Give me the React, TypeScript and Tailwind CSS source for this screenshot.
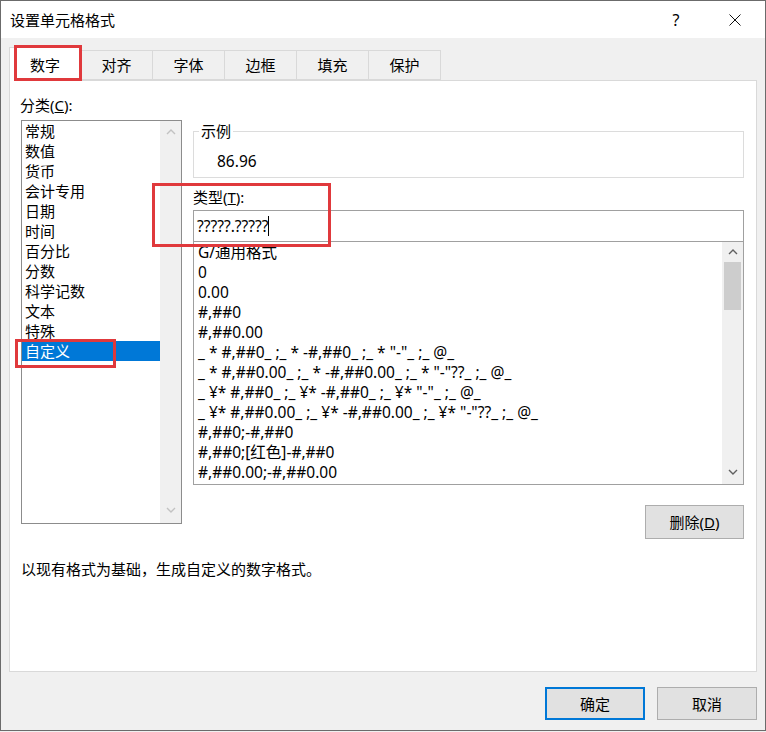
import React from "react";

function Chevron({ dir, color }: { dir: "up" | "down"; color: string }) {
  return (
    <svg width="10" height="6" viewBox="0 0 10 6" className="block">
      {dir === "up" ? (
        <polyline points="1,5 5,1 9,5" fill="none" stroke={color} strokeWidth="1.4" />
      ) : (
        <polyline points="1,1 5,5 9,1" fill="none" stroke={color} strokeWidth="1.4" />
      )}
    </svg>
  );
}

const categories = [
  "常规",
  "数值",
  "货币",
  "会计专用",
  "日期",
  "时间",
  "百分比",
  "分数",
  "科学记数",
  "文本",
  "特殊",
  "自定义",
];

const formats = [
  "G/通用格式",
  "0",
  "0.00",
  "#,##0",
  "#,##0.00",
  '_ * #,##0_ ;_ * -#,##0_ ;_ * "-"_ ;_ @_',
  '_ * #,##0.00_ ;_ * -#,##0.00_ ;_ * "-"??_ ;_ @_',
  '_ ¥* #,##0_ ;_ ¥* -#,##0_ ;_ ¥* "-"_ ;_ @_',
  '_ ¥* #,##0.00_ ;_ ¥* -#,##0.00_ ;_ ¥* "-"??_ ;_ @_',
  "#,##0;-#,##0",
  "#,##0;[红色]-#,##0",
  "#,##0.00;-#,##0.00",
];

const tabs = ["数字", "对齐", "字体", "边框", "填充", "保护"];

export default function App() {
  return (
    <div className="relative w-[766px] h-[732px] overflow-hidden bg-[#f0f0f0] text-[15px] text-black font-['Noto_Sans','Noto_Sans_CJK_SC',sans-serif]">
      <div className="w-[766px] h-[731px] border border-[#6b6b6b] flex flex-col bg-[#f0f0f0]">
        {/* Title bar */}
        <div className="h-[37px] bg-white flex items-center shrink-0">
          <div className="pl-[9px] leading-[20px]">设置单元格格式</div>
          <div className="ml-auto w-[12px] text-center text-[16px] leading-[20px] mr-[47px]">?</div>
          <div className="mr-[24px] flex items-center">
            <svg width="12" height="12" viewBox="0 0 12 12">
              <line x1="0.5" y1="0.5" x2="11.5" y2="11.5" stroke="#111" strokeWidth="1" />
              <line x1="11.5" y1="0.5" x2="0.5" y2="11.5" stroke="#111" strokeWidth="1" />
            </svg>
          </div>
        </div>

        {/* Body */}
        <div className="flex-1 flex flex-col pt-[9px]">
          {/* Tabs */}
          <div className="flex ml-[8px] h-[34px] relative z-10">
            {tabs.map((t, i) =>
              i === 0 ? (
                <div
                  key={t}
                  className="w-[72px] h-[34px] bg-white border border-b-0 border-[#d9d9d9] flex items-center justify-center leading-[20px]"
                >
                  {t}
                </div>
              ) : (
                <div
                  key={t}
                  className="w-[72px] h-[30px] mt-[3px] bg-[#f0f0f0] border border-l-0 border-[#d9d9d9] flex items-center justify-center leading-[20px]"
                >
                  {t}
                </div>
              )
            )}
          </div>

          {/* Panel */}
          <div className="ml-[8px] -mt-px w-[748px] h-[592px] bg-white border border-[#d9d9d9] pt-[14px] pl-[11px] pr-[11px] flex flex-col">
            <div className="flex">
              {/* Left column */}
              <div className="w-[161px] flex flex-col">
                <div className="h-[20px] leading-[20px] -ml-px">
                  分类(<span className="underline">C</span>):
                </div>
                <div className="mt-[5px] h-[404px] border border-[#8c8c8c] bg-white flex">
                  <div className="flex-1 flex flex-col">
                    {categories.map((c) => (
                      <div
                        key={c}
                        className={
                          c === "自定义"
                            ? "h-[20px] leading-[20px] pl-[3px] bg-[#0078d7] text-white"
                            : "h-[20px] leading-[20px] pl-[3px]"
                        }
                      >
                        {c}
                      </div>
                    ))}
                  </div>
                  <div className="w-[21px] bg-[#f0f0f0] flex flex-col justify-between items-center pt-[8px] pb-[10px]">
                    <Chevron dir="up" color="#c2c2c2" />
                    <Chevron dir="down" color="#c2c2c2" />
                  </div>
                </div>
              </div>

              {/* Right column */}
              <div className="ml-[11px] w-[551px] flex flex-col">
                <div className="relative mt-[36px] h-[47px] border border-[#dcdcdc] pl-[23px] pt-[19px]">
                  <div className="absolute left-[5px] -top-[11px] px-[2px] bg-white leading-[20px]">示例</div>
                  <div className="leading-[20px] text-[15.5px]">86.96</div>
                </div>
                <div className="mt-[9px] h-[20px] leading-[20px]">
                  类型(<span className="underline">T</span>):
                </div>
                <div className="mt-[3px] h-[32px] border border-[#a0a0a0] bg-white flex items-center pl-[3px]">
                  <span className="leading-[20px] text-[15.5px]">?????.?????</span>
                  <span className="w-px h-[20px] bg-black"></span>
                </div>
                <div className="-mt-px h-[244px] border border-[#a0a0a0] bg-white flex overflow-hidden">
                  <div className="flex-1 flex flex-col pl-[4px] overflow-hidden whitespace-pre text-[15.5px]">
                    {formats.map((f) => (
                      <div key={f} className="h-[20px] leading-[20px] shrink-0">
                        {f}
                      </div>
                    ))}
                  </div>
                  <div className="w-[21px] bg-[#f0f0f0] flex flex-col items-center">
                    <div className="h-[20px] flex items-center justify-center">
                      <Chevron dir="up" color="#606060" />
                    </div>
                    <div className="w-[17px] h-[48px] bg-[#cdcdcd]"></div>
                    <div className="mt-auto h-[20px] flex items-center justify-center mb-[2px]">
                      <Chevron dir="down" color="#606060" />
                    </div>
                  </div>
                </div>
                <div className="mt-[20px] self-end w-[99px] h-[34px] bg-[#e1e1e1] border border-[#adadad] flex items-center justify-center leading-[20px]">
                  删除(<span className="underline">D</span>)
                </div>
              </div>
            </div>
            <div className="mt-[20px] h-[20px] leading-[20px]">以现有格式为基础，生成自定义的数字格式。</div>
          </div>

          {/* Bottom buttons */}
          <div className="flex justify-end gap-[12px] pr-[8px] mt-[15px]">
            <div className="w-[100px] h-[33px] bg-[#e1e1e1] border-2 border-[#0078d7] flex items-center justify-center leading-[20px]">
              确定
            </div>
            <div className="w-[100px] h-[33px] bg-[#e1e1e1] border border-[#adadad] flex items-center justify-center leading-[20px]">
              取消
            </div>
          </div>
        </div>
      </div>

      {/* Red annotation boxes */}
      <div className="absolute left-[14px] top-[45px] w-[68px] h-[36px] border-[3px] border-[#e0393c] z-20 pointer-events-none"></div>
      <div className="absolute left-[152px] top-[183px] w-[179px] h-[64px] border-[3px] border-[#e0393c] z-20 pointer-events-none"></div>
      <div className="absolute left-[15px] top-[339px] w-[101px] h-[29px] border-[3px] border-[#e0393c] z-20 pointer-events-none"></div>
    </div>
  );
}
